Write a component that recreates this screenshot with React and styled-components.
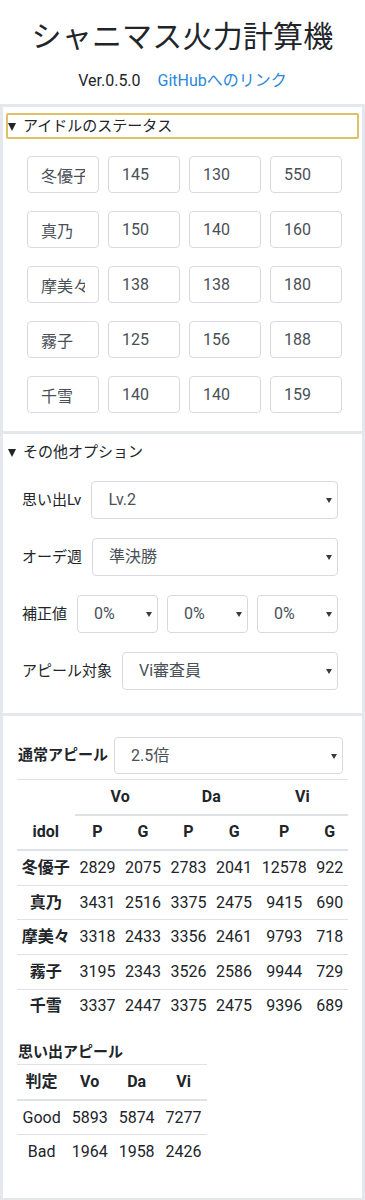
import React from "react";
import styled, { createGlobalStyle } from "styled-components";

const IDOLS = [
  { name: "冬優子", stats: [145, 130, 550], appeal: [2829, 2075, 2783, 2041, 12578, 922] },
  { name: "真乃", stats: [150, 140, 160], appeal: [3431, 2516, 3375, 2475, 9415, 690] },
  { name: "摩美々", stats: [138, 138, 180], appeal: [3318, 2433, 3356, 2461, 9793, 718] },
  { name: "霧子", stats: [125, 156, 188], appeal: [3195, 2343, 3526, 2586, 9944, 729] },
  { name: "千雪", stats: [140, 140, 159], appeal: [3337, 2447, 3375, 2475, 9396, 689] },
];

const MEMORY = [
  { label: "Good", values: [5893, 5874, 7277] },
  { label: "Bad", values: [1964, 1958, 2426] },
];

const GlobalStyle = createGlobalStyle`
  body {
    margin: 0;
    background: #fff;
    color: #212529;
    font-family: Roboto, "Noto Sans CJK JP", sans-serif;
    font-size: 16px;
    line-height: 1.5;
  }
  * { box-sizing: border-box; }
`;

function App() {
  return (
    <Page>
      <GlobalStyle />
      <Header>
        <Title>シャニマス火力計算機</Title>
        <Meta>
          <span>Ver.0.5.0</span>
          <Link href="#">GitHubへのリンク</Link>
        </Meta>
      </Header>

      <Panel as="details" open $pad="6px 0 18px">
        <Summary $focused>
          <Caret />
          アイドルのステータス
        </Summary>
        <StatusGrid>
          {IDOLS.map((idol) => (
            <React.Fragment key={idol.name}>
              <Field defaultValue={idol.name} />
              {idol.stats.map((s, i) => (
                <Field key={i} defaultValue={s} />
              ))}
            </React.Fragment>
          ))}
        </StatusGrid>
      </Panel>

      <Panel as="details" open $pad="5px 0 23px">
        <Summary>
          <Caret />
          その他オプション
        </Summary>
        <Options>
          <OptionRow>
            <Label>思い出Lv</Label>
            <SelectWrap>
              <Select defaultValue="2">
                <option value="2">Lv.2</option>
              </Select>
            </SelectWrap>
          </OptionRow>
          <OptionRow>
            <Label>オーデ週</Label>
            <SelectWrap>
              <Select defaultValue="semi">
                <option value="semi">準決勝</option>
              </Select>
            </SelectWrap>
          </OptionRow>
          <OptionRow>
            <Label>補正値</Label>
            {[0, 1, 2].map((i) => (
              <SelectWrap key={i}>
                <Select defaultValue="0">
                  <option value="0">0%</option>
                </Select>
              </SelectWrap>
            ))}
          </OptionRow>
          <OptionRow>
            <Label>アピール対象</Label>
            <SelectWrap>
              <Select defaultValue="vi">
                <option value="vi">Vi審査員</option>
              </Select>
            </SelectWrap>
          </OptionRow>
        </Options>
      </Panel>

      <Panel $pad="21px 14px 29px">
        <ResultHead>
          <Heading>通常アピール</Heading>
          <SelectWrap>
            <Select $h={37} defaultValue="2.5">
              <option value="2.5">2.5倍</option>
            </Select>
          </SelectWrap>
        </ResultHead>

        <Table $full>
          <thead>
            <tr>
              <Th $line="none" />
              <Th colSpan={2} $line="thick">Vo</Th>
              <Th colSpan={2} $line="thick">Da</Th>
              <Th colSpan={2} $line="thick">Vi</Th>
            </tr>
            <tr>
              <Th $line="thick">idol</Th>
              {["P", "G", "P", "G", "P", "G"].map((h, i) => (
                <Th key={i} $line="thick">{h}</Th>
              ))}
            </tr>
          </thead>
          <tbody>
            {IDOLS.map((idol, r) => (
              <tr key={idol.name}>
                <Th $line={r === IDOLS.length - 1 ? "none" : "thin"}>{idol.name}</Th>
                {idol.appeal.map((v, i) => (
                  <Td key={i} $line={r === IDOLS.length - 1 ? "none" : "thin"}>{v}</Td>
                ))}
              </tr>
            ))}
          </tbody>
        </Table>

        <SubHeading>思い出アピール</SubHeading>
        <Table $pad="5.5px">
          <thead>
            <tr>
              {["判定", "Vo", "Da", "Vi"].map((h) => (
                <Th key={h} $line="thick">{h}</Th>
              ))}
            </tr>
          </thead>
          <tbody>
            {MEMORY.map((m, r) => (
              <tr key={m.label}>
                <Td $line={r === MEMORY.length - 1 ? "none" : "thin"}>{m.label}</Td>
                {m.values.map((v, i) => (
                  <Td key={i} $line={r === MEMORY.length - 1 ? "none" : "thin"}>{v}</Td>
                ))}
              </tr>
            ))}
          </tbody>
        </Table>
      </Panel>
    </Page>
  );
}

export default App;

const Page = styled.div`
  width: 365px;
`;

const Header = styled.header`
  padding: 19px 0 11px;
  text-align: center;
`;

const Title = styled.h1`
  margin: 0;
  font-size: 30px;
  font-weight: 400;
  line-height: 36px;
  letter-spacing: 0.2px;
`;

const Meta = styled.div`
  display: flex;
  justify-content: center;
  gap: 17px;
  margin-top: 14px;
  line-height: 24px;
`;

const Link = styled.a`
  color: #2b87d8;
  text-decoration: none;
`;

const Panel = styled.section`
  display: block;
  border: 3px solid #e4e7eb;
  padding: ${(p) => p.$pad};
  & + & {
    margin-top: -3px;
  }
`;

const Summary = styled.summary`
  display: flex;
  align-items: center;
  gap: 7px;
  height: 26px;
  margin: 0 3px;
  border: 2px solid ${(p) => (p.$focused ? "#dfc067" : "transparent")};
  border-radius: 2px;
  list-style: none;
  font-size: 15px;
  line-height: 22px;
  cursor: pointer;
  &::-webkit-details-marker {
    display: none;
  }
`;

const Caret = styled.span`
  width: 0;
  height: 0;
  margin-top: 1px;
  border-left: 4.5px solid transparent;
  border-right: 4.5px solid transparent;
  border-top: 8px solid #212529;
`;

const StatusGrid = styled.div`
  display: grid;
  grid-template-columns: repeat(4, 1fr);
  column-gap: 9px;
  row-gap: 18px;
  margin-top: 17px;
  padding: 0 20px 0 24px;
`;

const Field = styled.input`
  min-width: 0;
  width: 100%;
  height: 37px;
  padding: 0 13px;
  border: 1px solid #d6dadf;
  border-radius: 4px;
  background: #fff;
  color: #495057;
  font: inherit;
  font-size: 16px;
`;

const Options = styled.div`
  display: flex;
  flex-direction: column;
  gap: 19px;
  margin-top: 16px;
  padding: 0 24px 0 19px;
`;

const OptionRow = styled.div`
  display: flex;
  align-items: center;
  gap: 9px;
`;

const Label = styled.span`
  margin-right: 1px;
  white-space: nowrap;
  font-size: 15px;
`;

const SelectWrap = styled.div`
  position: relative;
  flex: 1;
  min-width: 0;
  &::after {
    content: "";
    position: absolute;
    right: 6px;
    top: 50%;
    margin-top: -2px;
    border-left: 3.5px solid transparent;
    border-right: 3.5px solid transparent;
    border-top: 5px solid #3a3a3a;
    pointer-events: none;
  }
`;

const Select = styled.select`
  appearance: none;
  -webkit-appearance: none;
  display: block;
  width: 100%;
  height: ${(p) => p.$h || 38}px;
  padding: 0 20px 0 16px;
  border: 1px solid #d6dadf;
  border-radius: 4px;
  background: #fff;
  color: #495057;
  font: inherit;
  font-size: 16px;
`;

const ResultHead = styled.div`
  display: flex;
  align-items: center;
  gap: 6px;
  margin: 0 5px 5px 1px;
`;

const Heading = styled.span`
  font-size: 15px;
  font-weight: 700;
  white-space: nowrap;
`;

const SubHeading = styled.div`
  margin: 17px 0 0 1px;
  font-size: 15px;
  font-weight: 700;
  line-height: 24px;
`;

const Table = styled.table`
  --cell-pad: ${(p) => p.$pad || "4.8px"};
  width: ${(p) => (p.$full ? "100%" : "auto")};
  border-collapse: separate;
  border-spacing: 0;
  border-top: 1px solid #dee2e6;
  text-align: center;
  font-size: 16px;
`;

const lineStyle = (line) =>
  line === "thick" ? "2px solid #dee2e6" : line === "thin" ? "1px solid #dee2e6" : "none";

const Th = styled.th`
  padding: 4.8px var(--cell-pad);
  font-weight: 700;
  line-height: 24px;
  white-space: nowrap;
  border-bottom: ${(p) => lineStyle(p.$line)};
`;

const Td = styled.td`
  padding: 4.8px var(--cell-pad);
  line-height: 24px;
  white-space: nowrap;
  border-bottom: ${(p) => lineStyle(p.$line)};
`;
